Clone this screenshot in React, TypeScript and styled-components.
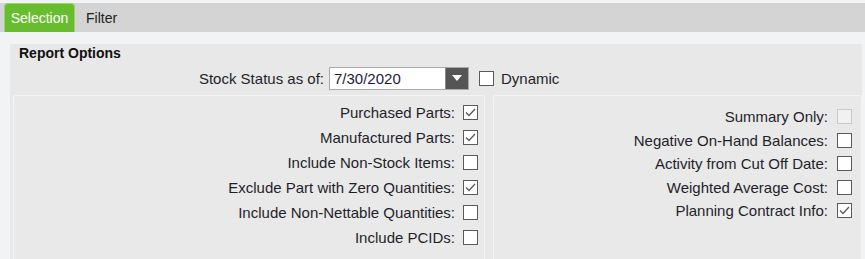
import React from 'react';
import styled, { createGlobalStyle } from 'styled-components';

const GlobalStyle = createGlobalStyle`
    html, body {
        margin: 0;
        padding: 0;
        background: #f2f3f5;
        font-family: "Liberation Sans", Arial, sans-serif;
        color: #1f1f2b;
    }
`

const Page = styled.div`
    width: 865px;
    height: 259px;
    overflow: hidden;
    padding-top: 3px;
    box-sizing: border-box;
`

const TabBar = styled.div`
    display: flex;
    align-items: stretch;
    height: 29px;
    background: #d4d4d4;
    padding-left: 4px;
`

const Tab = styled.div<{ active?: boolean }>`
    display: flex;
    align-items: center;
    justify-content: center;
    font-size: 14px;
    box-sizing: border-box;
    ${p => p.active ? `
        width: 71px;
        background: #68bd2f;
        color: #ffffff;
        border: 1px solid #9ad46c;
        border-bottom: none;
        border-radius: 4px 4px 0 0;
    ` : `
        padding: 0 11px;
        color: #222;
    `}
`

const Body = styled.div`
    padding: 11px 2px 0 9px;
`

const GroupBox = styled.div`
    height: 216px;
    background: #e8e8e8;
    border: 1px solid #f3f3f3;
    border-bottom: none;
    border-radius: 3px 3px 0 0;
    box-sizing: border-box;
    padding: 0 0 0 3px;
`

const GroupTitle = styled.div`
    font-size: 14px;
    font-weight: bold;
    color: #111;
    padding: 1px 0 0 6px;
    height: 16px;
`

const StockRow = styled.div`
    display: flex;
    align-items: center;
    height: 24px;
    margin-top: 5px;
`

const StockLabel = styled.span`
    width: 311px;
    text-align: right;
    font-size: 15px;
`

const DateInput = styled.div`
    display: flex;
    margin-left: 5px;
    width: 140px;
    height: 23px;
    border: 1px solid #a9a9a9;
    background: #fff;
    box-sizing: border-box;
`

const DateText = styled.span`
    flex: 1;
    font-size: 15px;
    line-height: 21px;
    padding-left: 4px;
    color: #1c1c3a;
`

const DropButton = styled.div`
    width: 22px;
    background: #555555;
    display: flex;
    align-items: center;
    justify-content: center;
    border-left: 1px solid #8a8a8a;
`

const CheckWrap = styled.div<{ disabled?: boolean }>`
    width: 15px;
    height: 15px;
    box-sizing: border-box;
    border: 1px solid ${p => p.disabled ? '#c9c9c9' : '#5a5a5a'};
    background: ${p => p.disabled ? '#f1f1f1' : '#ffffff'};
    display: flex;
    align-items: center;
    justify-content: center;
    flex-shrink: 0;
`

const DynamicBox = styled.div`
    display: flex;
    align-items: center;
    margin-left: 10px;
    gap: 7px;
    font-size: 15px;
`

const Columns = styled.div`
    display: flex;
    gap: 8px;
    margin-top: 5px;
`

const Panel = styled.div<{ width: number; padTop: number; padRight: number }>`
    width: ${p => p.width}px;
    height: 165px;
    box-sizing: border-box;
    background: #e9e9e9;
    border: 1px solid #f4f4f4;
    border-bottom: none;
    border-radius: 3px 3px 0 0;
    padding: ${p => p.padTop}px ${p => p.padRight}px 0 0;
    display: flex;
    flex-direction: column;
`

const OptionRow = styled.div<{ rowHeight: number; gap: number }>`
    display: flex;
    align-items: center;
    justify-content: flex-end;
    height: ${p => p.rowHeight}px;
    gap: ${p => p.gap}px;
    font-size: 15px;
`

const Check = ({ checked, disabled }: { checked?: boolean; disabled?: boolean }) => (
    <CheckWrap disabled={disabled}>
        {checked ? (
            <svg width="11" height="9" viewBox="0 0 11 9">
                <path d="M1 4.5 L4 7.5 L10 1" fill="none" stroke="#5c5c5c" strokeWidth="1.3" />
            </svg>
        ) : null}
    </CheckWrap>
)

const leftOptions = [
    { label: 'Purchased Parts:', checked: true },
    { label: 'Manufactured Parts:', checked: true },
    { label: 'Include Non-Stock Items:', checked: false },
    { label: 'Exclude Part with Zero Quantities:', checked: true },
    { label: 'Include Non-Nettable Quantities:', checked: false },
    { label: 'Include PCIDs:', checked: false },
]

const rightOptions = [
    { label: 'Summary Only:', checked: false, disabled: true },
    { label: 'Negative On-Hand Balances:', checked: false },
    { label: 'Activity from Cut Off Date:', checked: false },
    { label: 'Weighted Average Cost:', checked: false },
    { label: 'Planning Contract Info:', checked: true },
]

export default function App() {
    return (
        <React.Fragment>
            <GlobalStyle />
            <Page>
                <TabBar>
                    <Tab active>Selection</Tab>
                    <Tab>Filter</Tab>
                </TabBar>
                <Body>
                    <GroupBox>
                        <GroupTitle>Report Options</GroupTitle>
                        <StockRow>
                            <StockLabel>Stock Status as of:</StockLabel>
                            <DateInput>
                                <DateText>7/30/2020</DateText>
                                <DropButton>
                                    <svg width="10" height="6" viewBox="0 0 10 6">
                                        <path d="M0 0 H10 L5 6 Z" fill="#ffffff" />
                                    </svg>
                                </DropButton>
                            </DateInput>
                            <DynamicBox>
                                <Check />
                                <span>Dynamic</span>
                            </DynamicBox>
                        </StockRow>
                        <Columns>
                            <Panel width={472} padTop={4} padRight={6}>
                                {leftOptions.map(o => (
                                    <OptionRow key={o.label} rowHeight={25} gap={8}>
                                        <span>{o.label}</span>
                                        <Check checked={o.checked} />
                                    </OptionRow>
                                ))}
                            </Panel>
                            <Panel width={369} padTop={9} padRight={9}>
                                {rightOptions.map(o => (
                                    <OptionRow key={o.label} rowHeight={23.5} gap={9}>
                                        <span>{o.label}</span>
                                        <Check checked={o.checked} disabled={o.disabled} />
                                    </OptionRow>
                                ))}
                            </Panel>
                        </Columns>
                    </GroupBox>
                </Body>
            </Page>
        </React.Fragment>
    )
}
